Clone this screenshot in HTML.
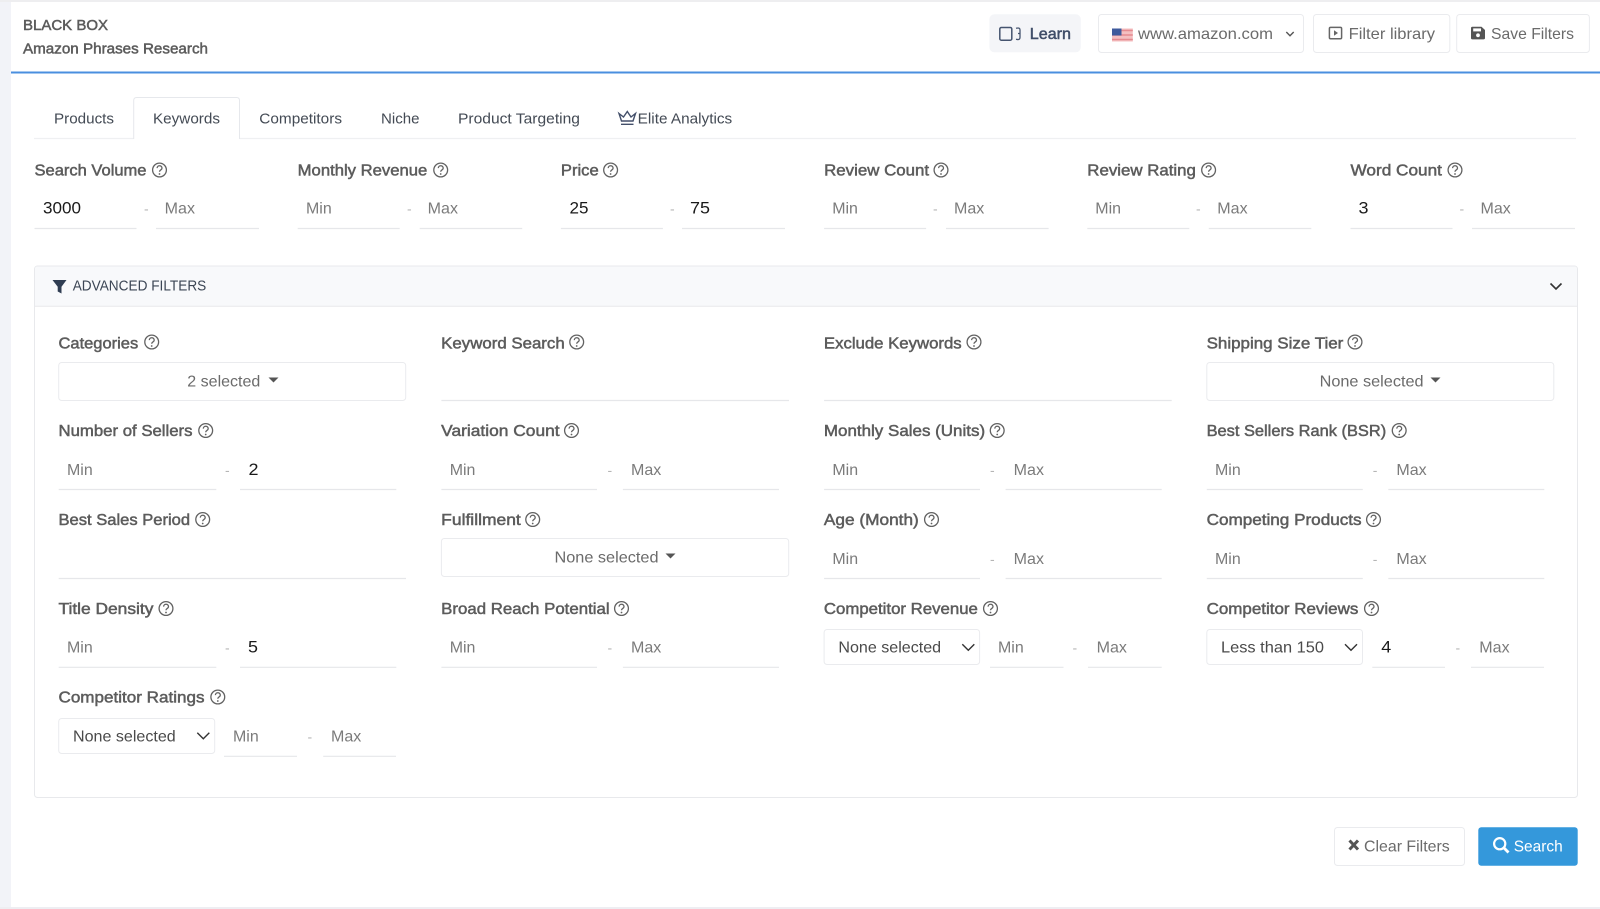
<!DOCTYPE html>
<html lang="en"><head><meta charset="utf-8"><title>Black Box - Amazon Phrases Research</title>
<style>
html,body{margin:0;padding:0;background:#fff;width:1600px;height:909px;overflow:hidden}
svg{display:block;font-family:"Liberation Sans",sans-serif;filter:blur(.25px)}
.l{font-size:16px;fill:#5c5c5c;stroke:#5c5c5c;stroke-width:.5px}
.p{font-size:16px;fill:#7b7b7b}
.v{font-size:16.5px;fill:#1a1a1a}
.d{font-size:14px;fill:#b5b5b5}
.t{font-size:15px;fill:#434a54}
.b{font-size:16px;fill:#6b6b6b}
.s{font-size:16px;fill:#4a4a4a}
.u{stroke:#e6e7ea;stroke-width:1.2;fill:none}
.box{fill:#fff;stroke:#eaebee;stroke-width:1}
</style></head><body>
<svg width="1600" height="909" viewBox="0 0 1600 909" xmlns="http://www.w3.org/2000/svg">
<defs>
<g id="h"><circle r="6.9" fill="none" stroke="#626262" stroke-width="1.3"/><path d="M-2.4-1.9C-2.3-5 2.5-5 2.5-1.9C2.5.1 0-.2 0 1.8" fill="none" stroke="#626262" stroke-width="1.3"/><circle cy="4" r=".9" fill="#626262"/></g>
<path id="c" d="M-6-3L0 3L6-3" fill="none" stroke="#333" stroke-width="1.4"/>
<path id="k" d="M-5-2.5H5L0 2.5Z" fill="#555"/>
</defs>

<rect width="1600" height="909" fill="#fff"/>
<rect width="11" height="909" fill="#f2f3f8"/>
<rect width="1600" height="2" fill="#eeeef0"/>
<rect y="907" width="1600" height="2" fill="#eeeef2"/>
<rect x="11" y="71.5" width="1589" height="2" fill="#4a8fdf"/>

<text x="23" y="30" class="l" style="font-size:15px" textLength="85" lengthAdjust="spacingAndGlyphs">BLACK BOX</text>
<text x="23" y="53.3" class="l" style="font-size:15px" textLength="185" lengthAdjust="spacingAndGlyphs">Amazon Phrases Research</text>

<rect x="989.4" y="14.3" width="91.4" height="38" rx="5" fill="#f4f5f8"/>
<rect x="999.8" y="27.5" width="12" height="12.7" rx="1.5" fill="none" stroke="#45546f" stroke-width="1.5"/>
<path d="M1016 28.3C1019.5 27.5 1020 28.5 1020 30V37.5C1020 39.2 1019 40 1016 39.3M1020 33.5H1018" fill="none" stroke="#45546f" stroke-width="1.3"/>
<text x="1029.8" y="39" class="t" style="font-size:16px;fill:#3f4d68;stroke:#3f4d68;stroke-width:.5px" textLength="41.2" lengthAdjust="spacingAndGlyphs">Learn</text>

<rect x="1098.5" y="14.5" width="205" height="38" rx="3" class="box"/>
<rect x="1112" y="28.5" width="20.8" height="13" fill="#f4bfc1"/>
<path d="M1112 30.5h20.8M1112 35h20.8M1112 39.5h20.8" stroke="#e58a90" stroke-width="1.5"/>
<rect x="1112" y="28.5" width="9.5" height="7" fill="#3e5a9c"/>
<text x="1138" y="39" class="b" textLength="135" lengthAdjust="spacingAndGlyphs">www.amazon.com</text>
<path d="M1286.3 32L1290 35.7L1293.7 32" fill="none" stroke="#555" stroke-width="1.4"/>

<rect x="1313.5" y="14.5" width="136.3" height="38" rx="3" class="box"/>
<rect x="1329.4" y="27.4" width="12.2" height="11.3" rx="1.2" fill="none" stroke="#666" stroke-width="1.5"/>
<path d="M1334 30.2L1338 33L1334 35.8Z" fill="#666"/>
<text x="1348.6" y="39" class="b" textLength="86.4" lengthAdjust="spacingAndGlyphs">Filter library</text>

<rect x="1456.7" y="14.5" width="132.7" height="38" rx="3" class="box"/>
<path d="M1472.4 26.7H1481.5L1485 30V38Q1485 39.4 1483.5 39.4H1472.4Q1471 39.4 1471 38V28.1Q1471 26.7 1472.4 26.7Z" fill="#555"/>
<rect x="1473.2" y="28.4" width="7.8" height="3" fill="#fff"/><circle cx="1478" cy="35.3" r="1.9" fill="#fff"/>
<text x="1491" y="39" class="b" textLength="83" lengthAdjust="spacingAndGlyphs">Save Filters</text>

<!-- tabs -->
<path d="M34 138.5H133.5M239.5 138.5H1576" fill="none" stroke="#eff0f2" stroke-width="1.2"/>
<path d="M133.7 139V100.5Q133.7 97.5 136.7 97.5H236.5Q239.5 97.5 239.5 100.5V139" fill="#fff" stroke="#e6e8ec"/>
<text x="54" y="123.5" class="t" textLength="60" lengthAdjust="spacingAndGlyphs">Products</text>
<text x="153" y="123.5" class="t" textLength="67" lengthAdjust="spacingAndGlyphs">Keywords</text>
<text x="259.3" y="123.5" class="t" textLength="82.7" lengthAdjust="spacingAndGlyphs">Competitors</text>
<text x="381" y="123.5" class="t" textLength="38.5" lengthAdjust="spacingAndGlyphs">Niche</text>
<text x="458" y="123.5" class="t" textLength="122" lengthAdjust="spacingAndGlyphs">Product Targeting</text>
<path d="M619 113.5L623.5 117L627.3 111.5L631 117L635.5 113.5L633 121H621.5ZM621 124.3H633.5" fill="none" stroke="#434f6a" stroke-width="1.4"/>
<text x="637.7" y="123.5" class="t" textLength="94.5" lengthAdjust="spacingAndGlyphs">Elite Analytics</text>

<!-- top row -->
<text x="34.5" y="175.7" class="l" textLength="112" lengthAdjust="spacingAndGlyphs">Search Volume</text><use href="#h" x="159.5" y="170"/>
<text x="297.7" y="175.7" class="l" textLength="129.6" lengthAdjust="spacingAndGlyphs">Monthly Revenue</text><use href="#h" x="440.7" y="170"/>
<text x="560.9" y="175.7" class="l" textLength="37.8" lengthAdjust="spacingAndGlyphs">Price</text><use href="#h" x="610.6" y="170"/>
<text x="824.1" y="175.7" class="l" textLength="105" lengthAdjust="spacingAndGlyphs">Review Count</text><use href="#h" x="941" y="170"/>
<text x="1087.3" y="175.7" class="l" textLength="108.6" lengthAdjust="spacingAndGlyphs">Review Rating</text><use href="#h" x="1208.6" y="170"/>
<text x="1350.5" y="175.7" class="l" textLength="91.4" lengthAdjust="spacingAndGlyphs">Word Count</text><use href="#h" x="1455" y="170"/>

<path class="u" d="M34.5 228.5H136.5M156 228.5H259M297.7 228.5H399.7M419.7 228.5H522.2M560.9 228.5H662.9M682 228.5H785M824.1 228.5H926.1M946 228.5H1048.6M1087.3 228.5H1189.3M1208.8 228.5H1311.3M1350.5 228.5H1452.5M1472 228.5H1575"/>
<text x="43" y="213.7" class="v" textLength="38" lengthAdjust="spacingAndGlyphs">3000</text><text x="144" y="213.7" class="d">-</text><text x="164.7" y="213.7" class="p" textLength="30.3" lengthAdjust="spacingAndGlyphs">Max</text>
<text x="306" y="213.7" class="p" textLength="25.7" lengthAdjust="spacingAndGlyphs">Min</text><text x="407" y="213.7" class="d">-</text><text x="427.7" y="213.7" class="p" textLength="30.3" lengthAdjust="spacingAndGlyphs">Max</text>
<text x="569.5" y="213.7" class="v" textLength="19" lengthAdjust="spacingAndGlyphs">25</text><text x="670" y="213.7" class="d">-</text><text x="690" y="213.7" class="v" textLength="20" lengthAdjust="spacingAndGlyphs">75</text>
<text x="832.2" y="213.7" class="p" textLength="25.7" lengthAdjust="spacingAndGlyphs">Min</text><text x="933" y="213.7" class="d">-</text><text x="954" y="213.7" class="p" textLength="30.3" lengthAdjust="spacingAndGlyphs">Max</text>
<text x="1095.3" y="213.7" class="p" textLength="25.7" lengthAdjust="spacingAndGlyphs">Min</text><text x="1196" y="213.7" class="d">-</text><text x="1217.3" y="213.7" class="p" textLength="30.3" lengthAdjust="spacingAndGlyphs">Max</text>
<text x="1358.5" y="213.7" class="v" textLength="10" lengthAdjust="spacingAndGlyphs">3</text><text x="1459.5" y="213.7" class="d">-</text><text x="1480.5" y="213.7" class="p" textLength="30.3" lengthAdjust="spacingAndGlyphs">Max</text>

<!-- advanced panel -->
<rect x="34.5" y="266" width="1543" height="531.5" rx="3" fill="#fff" stroke="#e8e9ec"/>
<path d="M35 306V269Q35 266.5 37.5 266.5H1574.5Q1577 266.5 1577 269V306Z" fill="#f8f9fb"/>
<path d="M35 306.3H1577" stroke="#e8e9ec" fill="none"/>
<path d="M52.5 280H66.5L61.5 286.8V293.5L57.7 291.5V286.8Z" fill="#2f3d52"/>
<text x="72.7" y="290.7" style="font-size:14.5px;fill:#3c4655" textLength="133.6" lengthAdjust="spacingAndGlyphs">ADVANCED FILTERS</text>
<path d="M1550.5 283.5L1556 289L1561.5 283.5" fill="none" stroke="#333" stroke-width="1.6"/>

<!-- row 1 -->
<text x="58.5" y="348.3" class="l" textLength="79.7" lengthAdjust="spacingAndGlyphs">Categories</text><use href="#h" x="151.7" y="342"/>
<text x="441.2" y="348.3" class="l" textLength="123.5" lengthAdjust="spacingAndGlyphs">Keyword Search</text><use href="#h" x="576.7" y="342"/>
<text x="823.9" y="348.3" class="l" textLength="137.8" lengthAdjust="spacingAndGlyphs">Exclude Keywords</text><use href="#h" x="974" y="342"/>
<text x="1206.6" y="348.3" class="l" textLength="136.7" lengthAdjust="spacingAndGlyphs">Shipping Size Tier</text><use href="#h" x="1355" y="342"/>
<rect x="58.7" y="362.5" width="347" height="38" rx="3" class="box"/>
<text x="187.3" y="386.7" class="b" textLength="73" lengthAdjust="spacingAndGlyphs">2 selected</text><use href="#k" x="273.5" y="380"/>
<path class="u" d="M441.4 400.5H789M824.1 400.5H1171.7"/>
<rect x="1206.8" y="362.5" width="347" height="38" rx="3" class="box"/>
<text x="1319.6" y="386.7" class="b" textLength="104" lengthAdjust="spacingAndGlyphs">None selected</text><use href="#k" x="1435.5" y="380"/>

<!-- row 2 -->
<text x="58.5" y="436" class="l" textLength="134" lengthAdjust="spacingAndGlyphs">Number of Sellers</text><use href="#h" x="205.7" y="430.5"/>
<text x="441.2" y="436" class="l" textLength="118.4" lengthAdjust="spacingAndGlyphs">Variation Count</text><use href="#h" x="571.5" y="430.5"/>
<text x="823.9" y="436" class="l" textLength="161.2" lengthAdjust="spacingAndGlyphs">Monthly Sales (Units)</text><use href="#h" x="997.2" y="430.5"/>
<text x="1206.6" y="436" class="l" textLength="179.6" lengthAdjust="spacingAndGlyphs">Best Sellers Rank (BSR)</text><use href="#h" x="1399.2" y="430.5"/>
<path class="u" d="M58.7 489.5H216.3M240 489.5H396.3M441.4 489.5H597M622.9 489.5H779M824.1 489.5H980M1005.6 489.5H1161.7M1206.8 489.5H1362.8M1388.3 489.5H1544.3"/>
<text x="67" y="475" class="p" textLength="25.7" lengthAdjust="spacingAndGlyphs">Min</text><text x="225" y="475" class="d">-</text><text x="248.5" y="475" class="v" textLength="10" lengthAdjust="spacingAndGlyphs">2</text>
<text x="449.7" y="475" class="p" textLength="25.7" lengthAdjust="spacingAndGlyphs">Min</text><text x="607.5" y="475" class="d">-</text><text x="631" y="475" class="p" textLength="30.3" lengthAdjust="spacingAndGlyphs">Max</text>
<text x="832.4" y="475" class="p" textLength="25.7" lengthAdjust="spacingAndGlyphs">Min</text><text x="990" y="475" class="d">-</text><text x="1013.7" y="475" class="p" textLength="30.3" lengthAdjust="spacingAndGlyphs">Max</text>
<text x="1215" y="475" class="p" textLength="25.7" lengthAdjust="spacingAndGlyphs">Min</text><text x="1372.8" y="475" class="d">-</text><text x="1396.4" y="475" class="p" textLength="30.3" lengthAdjust="spacingAndGlyphs">Max</text>

<!-- row 3 -->
<text x="58.5" y="525" class="l" textLength="131.6" lengthAdjust="spacingAndGlyphs">Best Sales Period</text><use href="#h" x="202.7" y="519.5"/>
<text x="441.2" y="525" class="l" textLength="79.6" lengthAdjust="spacingAndGlyphs">Fulfillment</text><use href="#h" x="532.7" y="519.5"/>
<text x="823.9" y="525" class="l" textLength="94.9" lengthAdjust="spacingAndGlyphs">Age (Month)</text><use href="#h" x="931.5" y="519.5"/>
<text x="1206.6" y="525" class="l" textLength="155" lengthAdjust="spacingAndGlyphs">Competing Products</text><use href="#h" x="1373.5" y="519.5"/>
<path class="u" d="M58.7 578.5H406M824.1 578.5H980M1005.6 578.5H1161.7M1206.8 578.5H1362.8M1388.3 578.5H1544.3"/>
<rect x="441.4" y="538.5" width="347.3" height="38" rx="3" class="box"/>
<text x="554.5" y="562.5" class="b" textLength="104" lengthAdjust="spacingAndGlyphs">None selected</text><use href="#k" x="670.5" y="556"/>
<text x="832.4" y="563.8" class="p" textLength="25.7" lengthAdjust="spacingAndGlyphs">Min</text><text x="990" y="563.8" class="d">-</text><text x="1013.7" y="563.8" class="p" textLength="30.3" lengthAdjust="spacingAndGlyphs">Max</text>
<text x="1215" y="563.8" class="p" textLength="25.7" lengthAdjust="spacingAndGlyphs">Min</text><text x="1372.8" y="563.8" class="d">-</text><text x="1396.4" y="563.8" class="p" textLength="30.3" lengthAdjust="spacingAndGlyphs">Max</text>

<!-- row 4 -->
<text x="58.5" y="614" class="l" textLength="94.9" lengthAdjust="spacingAndGlyphs">Title Density</text><use href="#h" x="166" y="608.5"/>
<text x="441.2" y="614" class="l" textLength="168.4" lengthAdjust="spacingAndGlyphs">Broad Reach Potential</text><use href="#h" x="621.5" y="608.5"/>
<text x="823.9" y="614" class="l" textLength="154" lengthAdjust="spacingAndGlyphs">Competitor Revenue</text><use href="#h" x="990.5" y="608.5"/>
<text x="1206.6" y="614" class="l" textLength="151.7" lengthAdjust="spacingAndGlyphs">Competitor Reviews</text><use href="#h" x="1371.5" y="608.5"/>
<path class="u" d="M58.7 667.3H216.3M240 667.3H396.3M441.4 667.3H597M622.9 667.3H779M990 667.3H1063.5M1088 667.3H1161.7M1372.3 667.3H1445M1471 667.3H1544"/>
<text x="67" y="652.4" class="p" textLength="25.7" lengthAdjust="spacingAndGlyphs">Min</text><text x="225" y="652.4" class="d">-</text><text x="248" y="652.4" class="v" textLength="10" lengthAdjust="spacingAndGlyphs">5</text>
<text x="449.7" y="652.4" class="p" textLength="25.7" lengthAdjust="spacingAndGlyphs">Min</text><text x="607.5" y="652.4" class="d">-</text><text x="631" y="652.4" class="p" textLength="30.3" lengthAdjust="spacingAndGlyphs">Max</text>
<rect x="824.1" y="629.5" width="155.5" height="35" rx="3" class="box"/>
<text x="838.4" y="652.4" class="s" textLength="102.7" lengthAdjust="spacingAndGlyphs">None selected</text><use href="#c" x="968.3" y="647.3"/>
<text x="998" y="652.4" class="p" textLength="25.7" lengthAdjust="spacingAndGlyphs">Min</text><text x="1072.5" y="652.4" class="d">-</text><text x="1096.6" y="652.4" class="p" textLength="30.3" lengthAdjust="spacingAndGlyphs">Max</text>
<rect x="1206.8" y="629.5" width="155.7" height="35" rx="3" class="box"/>
<text x="1221" y="652.4" class="s" textLength="103" lengthAdjust="spacingAndGlyphs">Less than 150</text><use href="#c" x="1351" y="647.3"/>
<text x="1381.3" y="652.4" class="v" textLength="10" lengthAdjust="spacingAndGlyphs">4</text><text x="1455.5" y="652.4" class="d">-</text><text x="1479.3" y="652.4" class="p" textLength="30.3" lengthAdjust="spacingAndGlyphs">Max</text>

<!-- row 5 -->
<text x="58.5" y="702.3" class="l" textLength="146" lengthAdjust="spacingAndGlyphs">Competitor Ratings</text><use href="#h" x="217.8" y="697"/>
<rect x="58.7" y="718.5" width="156" height="35" rx="3" class="box"/>
<text x="73" y="741.3" class="s" textLength="102.7" lengthAdjust="spacingAndGlyphs">None selected</text><use href="#c" x="203.3" y="735.7"/>
<text x="233" y="741.3" class="p" textLength="25.7" lengthAdjust="spacingAndGlyphs">Min</text><text x="307.5" y="741.3" class="d">-</text><text x="331" y="741.3" class="p" textLength="30.3" lengthAdjust="spacingAndGlyphs">Max</text>
<path class="u" d="M224 756.3H297M323.2 756.3H396"/>

<!-- actions -->
<rect x="1334.5" y="827.5" width="130" height="38" rx="3" class="box"/>
<path d="M1349.5 840.5L1358 849.5M1358 840.5L1349.5 849.5" stroke="#555" stroke-width="3" fill="none"/>
<text x="1364" y="851.7" class="b" textLength="85.7" lengthAdjust="spacingAndGlyphs">Clear Filters</text>
<rect x="1478.3" y="827.3" width="99.4" height="38.4" rx="3" fill="#3498db"/>
<circle cx="1499.7" cy="843.7" r="5.6" fill="none" stroke="#fff" stroke-width="2.2"/>
<path d="M1503.8 847.8L1508.5 852.5" stroke="#fff" stroke-width="2.8" fill="none"/>
<text x="1513.7" y="851.7" style="font-size:16px;fill:#fff" textLength="49" lengthAdjust="spacingAndGlyphs">Search</text>
</svg>
</body></html>
